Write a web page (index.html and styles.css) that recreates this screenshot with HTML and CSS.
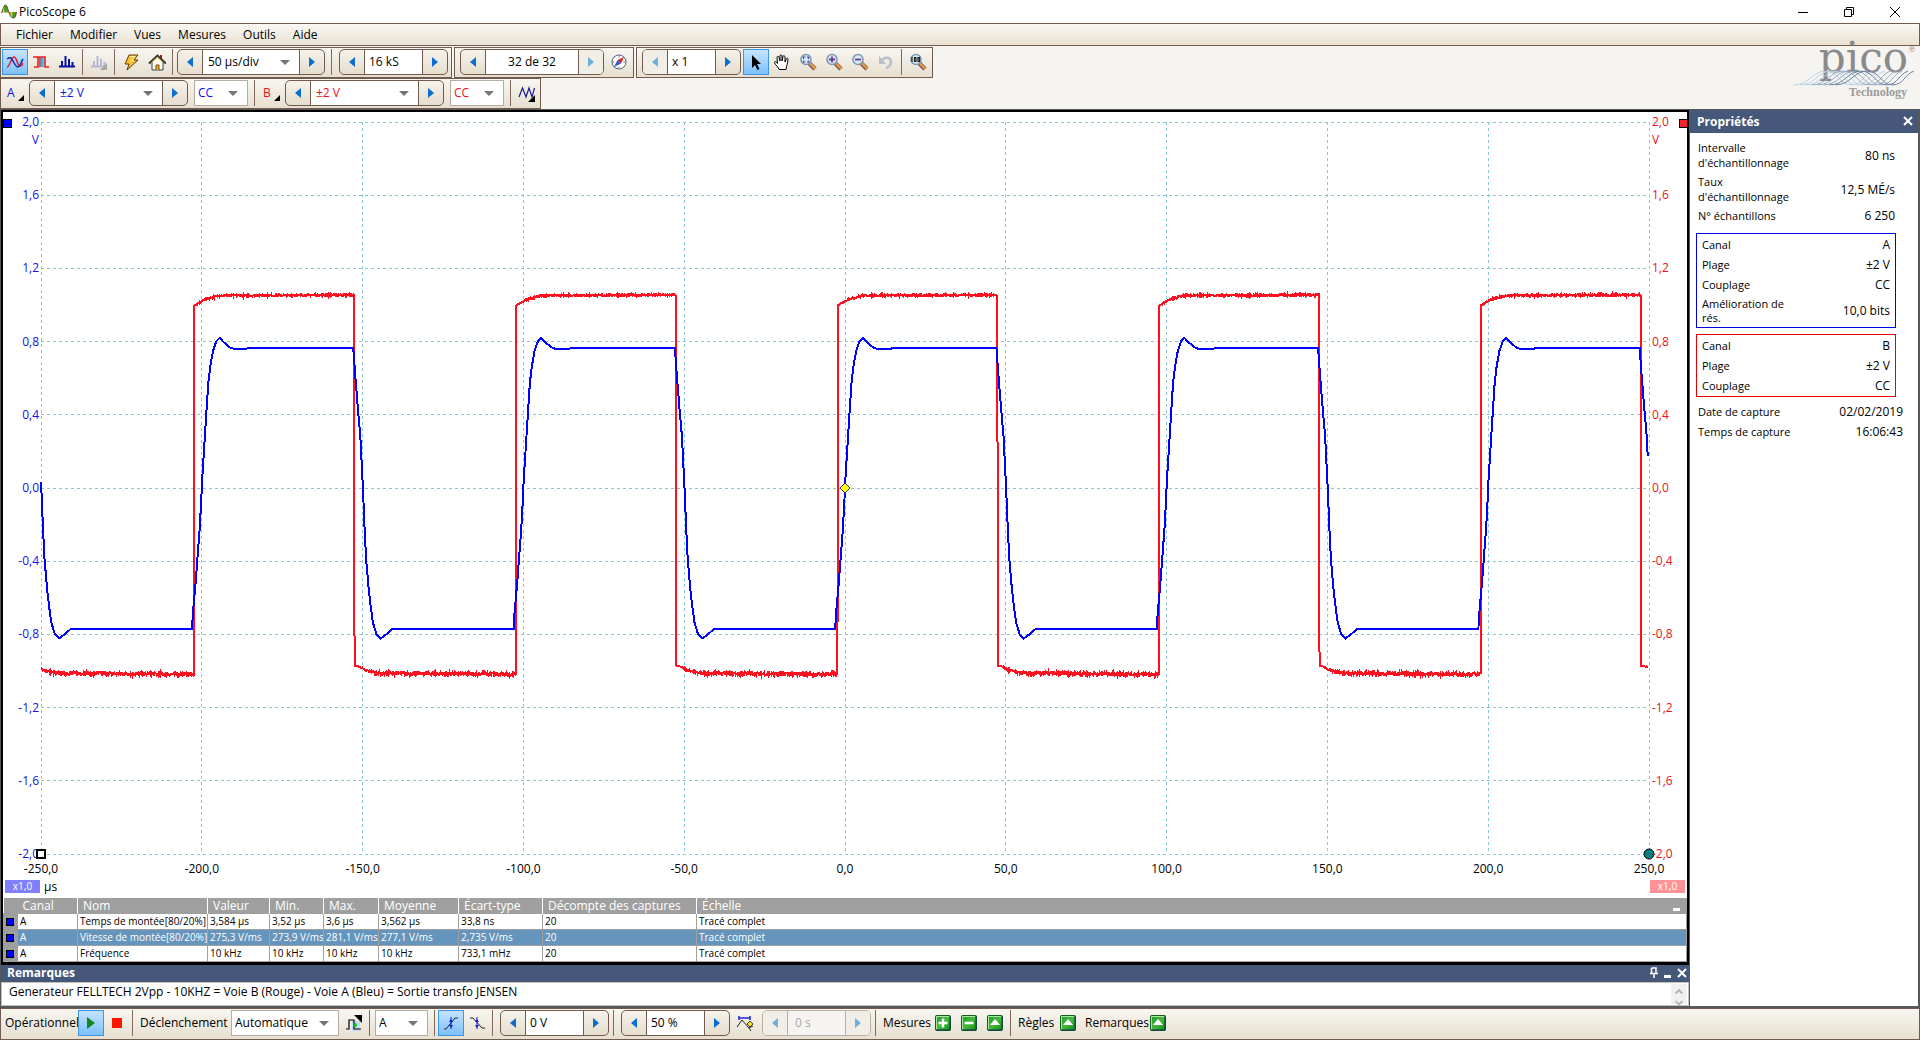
FILE: index.html
```html
<!DOCTYPE html>
<html lang="fr">
<head>
<meta charset="utf-8">
<title>PicoScope 6</title>
<link rel="stylesheet" href="styles.css">
</head>
<body>
<svg class="defs" width="0" height="0" aria-hidden="true">
  <defs>
    <linearGradient id="rainbow"><stop offset="0" stop-color="#e02818"/><stop offset=".3" stop-color="#e8d820"/><stop offset=".5" stop-color="#28a828"/><stop offset=".8" stop-color="#7a9818"/><stop offset="1" stop-color="#c84818"/></linearGradient>
    <linearGradient id="persist"><stop offset="0" stop-color="#f43c3c"/><stop offset=".5" stop-color="#30b8f0"/><stop offset="1" stop-color="#d8f4ff"/></linearGradient>
    <linearGradient id="green" x2="1" y2="1"><stop offset="0" stop-color="#1e9a2c"/><stop offset=".5" stop-color="#46b83c"/><stop offset="1" stop-color="#08900c"/></linearGradient>
    <symbol id="left" viewBox="0 0 8 12"><path d="M7 1v10L1 6z"/></symbol>
    <symbol id="right" viewBox="0 0 8 12"><path d="M1 1v10l6-5z"/></symbol>
    <symbol id="lens" viewBox="0 0 18 18"><path d="M10 10l6 6" stroke="#6a5a70" stroke-width="4.500"/><path d="M10.500 10l6 6" stroke="#f09838" stroke-width="2.400"/><circle cx="7" cy="6.500" r="5" fill="#d4ecf8" stroke="#8098b0" stroke-width="1.600"/></symbol>
    <symbol id="box" viewBox="0 0 16 16"><rect x=".5" y=".5" width="15" height="15" rx="1" fill="url(#green)" stroke="#106018"/><path d="M1.500 14V1.500H14" fill="none" stroke="#a8e8a0"/><path d="M15 1v14H1" fill="none" stroke="#163060"/></symbol>
    <symbol id="boxup" viewBox="0 0 16 16"><use href="#box"/><path d="M8 4l5 6H3z" fill="#fff"/></symbol>
  </defs>
</svg>

<div class="app">
  <header class="titlebar">
    <svg class="appicon" viewBox="0 0 16 16"><path d="M0 8.500C2 8 2 1 4.500 1S7 8 8 8.500z" fill="url(#rainbow)"/><path d="M8 8h8c-1 3-1 6-3.500 6S9 10 8 8z" fill="url(#rainbow)"/><path d="M0 9C2 8 2 1 4.500 1S8 14 12 14s2-6 4-6" fill="none" stroke="#333" stroke-width=".8"/></svg>
    <h1>PicoScope 6</h1>
    <div class="winbtns">
      <button aria-label="Réduire"><svg viewBox="0 0 12 12"><path d="M1 6.500h10" stroke="#000"/></svg></button>
      <button aria-label="Restaurer"><svg viewBox="0 0 12 12" fill="none" stroke="#000"><path d="M1.500 3.500h7v7h-7zM3.500 3.500v-2h7v7h-2"/></svg></button>
      <button aria-label="Fermer"><svg viewBox="0 0 12 12" stroke="#000"><path d="M1 1l10 10M11 1L1 11"/></svg></button>
    </div>
  </header>

  <nav class="menubar">
    <button>Fichier</button><button>Modifier</button><button>Vues</button><button>Mesures</button><button>Outils</button><button>Aide</button>
  </nav>

  <div class="toolarea">
    <div class="toolbars">
      <div class="toolrow">
        <div class="toolbar">
          <button class="tool on" aria-label="Mode oscilloscope"><svg viewBox="0 0 18 18" fill="none" stroke-width="1.500"><path d="M1 14C4 14 5 4 8 4s3 9 6 9 2-2 3-3" stroke="#e02020"/><path d="M1 6c3-2 4-2 6 2s3 6 5 6 3-5 5-8" stroke="#1428b0"/></svg></button>
          <button class="tool" aria-label="Mode persistance"><svg viewBox="0 0 18 18" fill="none"><rect x="7" y="4" width="7" height="10" fill="url(#persist)"/><path d="M1 4h12v10h4M6 4v10H2" stroke="#f02020" stroke-width="1.600"/></svg></button>
          <button class="tool" aria-label="Mode spectre"><svg viewBox="0 0 18 18"><path d="M1 13.500h16M4 14V8M7.500 14V3M11 14V6M14.500 14V9" stroke="#0c10a0" stroke-width="2"/></svg></button>
          <span class="sep"></span>
          <button class="tool" aria-label="Options du spectre" disabled><svg viewBox="0 0 18 18"><path d="M1 13.500h14M4 14V8M7.500 14V3M11 14V6M14.500 14V9" stroke="#b8b8d4" stroke-width="2"/><path d="M17 10v7h-7z" fill="#a8a8a0"/></svg></button>
          <span class="sep"></span>
          <button class="tool" aria-label="Configuration automatique"><svg viewBox="0 0 18 18"><path d="M7 2h9l-4 5h4L5 17l2-6H3z" fill="#f8c030" stroke="#5c3c08"/><path d="M8 3.500h5l-4 4h3" fill="none" stroke="#fff0a0"/></svg></button>
          <button class="tool" aria-label="Accueil"><svg viewBox="0 0 18 18"><path d="M4 9v8h11V9L9.500 4z" fill="#fffbe8" stroke="#304060"/><path d="M13 2v5" stroke="#a02020" stroke-width="2"/><path d="M1 10.500l8.500-8L18 10.500" fill="none" stroke="#303030" stroke-width="2"/><path d="M3.500 9.500l6-5.500L15 9.500" fill="none" stroke="#f0c040"/><path d="M8 17v-5h3v5" fill="#f0b030" stroke="#704808"/></svg></button>
          <span class="sep"></span>
          <div class="spin"><button aria-label="Base de temps précédente"><svg><use href="#left"/></svg></button><span class="drop w98"><select aria-label="Base de temps"><option>50 µs/div</option></select></span><button aria-label="Base de temps suivante"><svg><use href="#right"/></svg></button></div>
          <span class="sep wide"></span>
          <div class="spin"><button aria-label="Moins"><svg><use href="#left"/></svg></button><input class="w59" aria-label="Échantillons" value="16 kS"><button aria-label="Plus"><svg><use href="#right"/></svg></button></div>
        </div>
        <div class="toolbar inset">
          <div class="spin"><button aria-label="Tampon précédent"><svg><use href="#left"/></svg></button><input class="w94 center" aria-label="Tampon" value="32 de 32"><button class="dim" aria-label="Tampon suivant" disabled><svg><use href="#right"/></svg></button></div>
          <button class="tool" aria-label="Navigateur de tampons"><svg viewBox="0 0 18 18"><circle cx="9" cy="9" r="7" fill="#fff" stroke="#505878"/><path d="M9 2.500v2M9 13.500v2M2.500 9h2M13.500 9h2" stroke="#8088a0"/><path d="M14 4l-3 6.500L7.500 7z" fill="#e82020"/><path d="M4 14l3.500-7 3.500 3.500z" fill="#3058c8"/></svg></button>
        </div>
        <div class="toolbar inset">
          <div class="spin"><button class="dim" aria-label="Zoom arrière" disabled><svg><use href="#left"/></svg></button><input class="w49" aria-label="Facteur de zoom" value="x 1"><button aria-label="Zoom avant"><svg><use href="#right"/></svg></button></div>
          <button class="tool on" aria-label="Sélection"><svg viewBox="0 0 18 18"><path d="M5 2v13l3-3 2.500 5 2-1-2.500-5h4z"/></svg></button>
          <button class="tool" aria-label="Main"><svg viewBox="0 0 18 18"><path d="M6 16.500c0-2-4-4.500-4.500-7 0-1.500 2-1 3 1L4 4.500c0-1.500 1.800-1.500 2 0L7 8V3c0-1.500 2-1.500 2 0v5l1-4.500c.3-1.300 2-1 2 .5V9l1.300-3c.5-1.200 1.800-.8 1.700.5-.2 4-1.500 6-2 10z" fill="#fff" stroke="#000"/></svg></button>
          <button class="tool" aria-label="Zoom fenêtre"><svg viewBox="0 0 18 18"><use href="#lens"/><path d="M4.500 6V4h2M8 4h1.500v2M9.500 7.500V9H8M6.500 9h-2V7.500" fill="none" stroke="#5048a0" stroke-width="1.200"/></svg></button>
          <button class="tool" aria-label="Agrandir"><svg viewBox="0 0 18 18"><use href="#lens"/><path d="M4 6.500h6M7 3.500v6" stroke="#703890" stroke-width="1.800"/></svg></button>
          <button class="tool" aria-label="Réduire le zoom"><svg viewBox="0 0 18 18"><use href="#lens"/><path d="M4 6.500h6" stroke="#703890" stroke-width="1.800"/></svg></button>
          <button class="tool" aria-label="Annuler le zoom" disabled><svg viewBox="0 0 18 18"><path d="M4 8c4-5 10-4 10 1 0 3-2 5-5 6" fill="none" stroke="#b8c0cc" stroke-width="2.600"/><path d="M2 3v8h7z" fill="#b8c0cc"/></svg></button>
          <span class="sep"></span>
          <button class="tool" aria-label="Zoom 100 %"><svg viewBox="0 0 18 18"><use href="#lens"/><path d="M3 4v5M5.500 4.500H7v4H5.500zM9 4.500h1.500v4H9z" fill="none" stroke="#222" stroke-width="1.200"/></svg></button>
        </div>
      </div>
      <div class="toolrow">
        <div class="toolbar tight">
          <button class="chan blue">A<svg viewBox="0 0 6 6"><path d="M6 0v6H0z"/></svg></button>
          <div class="spin blue"><button aria-label="Plage A inférieure"><svg><use href="#left"/></svg></button><span class="drop w109"><select aria-label="Plage A"><option>±2 V</option></select></span><button aria-label="Plage A supérieure"><svg><use href="#right"/></svg></button></div>
          <span class="drop boxed w54 blue"><select aria-label="Couplage A"><option>CC</option></select></span>
          <span class="sep mid"></span>
          <button class="chan red">B<svg viewBox="0 0 6 6"><path d="M6 0v6H0z"/></svg></button>
          <div class="spin red"><button aria-label="Plage B inférieure"><svg><use href="#left"/></svg></button><span class="drop w109"><select aria-label="Plage B"><option>±2 V</option></select></span><button aria-label="Plage B supérieure"><svg><use href="#right"/></svg></button></div>
          <span class="drop boxed w54 red"><select aria-label="Couplage B"><option>CC</option></select></span>
          <span class="sep mid"></span>
          <button class="tool" aria-label="Générateur"><svg viewBox="0 0 18 18"><path d="M1 13L4.500 4 8 13l3-9 3 9 2.500-9" fill="none" stroke="#1a1a90" stroke-width="1.200"/><path d="M17 11v7h-7z"/></svg></button>
        </div>
      </div>
    </div>
    <div class="logo"><span class="pico">pico<sup>®</sup></span>
      <svg viewBox="0 0 124 16" fill="none" stroke-width="1"><g id="waves"></g></svg>
      <span class="tech">Technology</span>
    </div>
  </div>

  <main class="workspace">
    <section class="left">
      <div class="view">
        <div class="scope">
          <ul class="yaxis blue"><li>2,0<br>V</li><li>1,6</li><li>1,2</li><li>0,8</li><li>0,4</li><li>0,0</li><li>-0,4</li><li>-0,8</li><li>-1,2</li><li>-1,6</li><li>-2,0</li></ul>
          <div class="plot">
            <svg class="chart" role="img" aria-label="Signaux des voies A et B">
              <g id="grid" stroke="#8cc6d8" stroke-dasharray="3 3"></g>
              <svg id="signals" viewBox="-250 -2 500 4" preserveAspectRatio="none" width="100%" height="100%"></svg>
              <rect x="-37.500" y="-2.500" width="8" height="8" fill="#0000ff" stroke="#000"/>
              <svg x="100%"><rect x="30.500" y="-2.500" width="8" height="8" fill="#ff2030" stroke="#000"/></svg>
              <svg y="100%"><rect x="-4" y="-4" width="8" height="8" fill="#fff" stroke="#000" stroke-width="1.500"/></svg>
              <svg x="50%" y="50%"><path d="M0-5L5 0 0 5-5 0z" fill="#ff0" stroke="#303090"/></svg>
              <svg x="100%" y="100%"><circle r="5" fill="#008080" stroke="#000" stroke-width="1"/></svg>
            </svg>
          </div>
          <ul class="yaxis end red"><li>2,0<br>V</li><li>1,6</li><li>1,2</li><li>0,8</li><li>0,4</li><li>0,0</li><li>-0,4</li><li>-0,8</li><li>-1,2</li><li>-1,6</li><li>-2,0</li></ul>
          <ul class="xaxis"><li>-250,0</li><li>-200,0</li><li>-150,0</li><li>-100,0</li><li>-50,0</li><li>0,0</li><li>50,0</li><li>100,0</li><li>150,0</li><li>200,0</li><li>250,0</li></ul>
          <div class="scales"><span class="scale a">x1,0</span><span>µs</span><span class="scale b">x1,0</span></div>
        </div>
        <table class="measures">
          <colgroup><col class="c0"><col class="c1"><col class="c2"><col class="c3"><col class="c4"><col class="c5"><col class="c6"><col class="c7"><col class="c8"><col></colgroup>
          <thead><tr><th></th><th>Canal</th><th>Nom</th><th>Valeur</th><th>Min.</th><th>Max.</th><th>Moyenne</th><th>Écart-type</th><th>Décompte des captures</th><th><span class="lasthead">Échelle<button aria-label="Réduire le tableau"></button></span></th></tr></thead>
          <tbody>
            <tr><td><i></i></td><td>A</td><td><span class="name">Temps de montée<span>[80/20%]</span></span></td><td>3,584 µs</td><td>3,52 µs</td><td>3,6 µs</td><td>3,562 µs</td><td>33,8 ns</td><td>20</td><td>Tracé complet</td></tr>
            <tr class="sel"><td><i></i></td><td>A</td><td><span class="name">Vitesse de montée<span>[80/20%]</span></span></td><td>275,3 V/ms</td><td>273,9 V/ms</td><td>281,1 V/ms</td><td>277,1 V/ms</td><td>2,735 V/ms</td><td>20</td><td>Tracé complet</td></tr>
            <tr><td><i></i></td><td>A</td><td>Fréquence</td><td>10 kHz</td><td>10 kHz</td><td>10 kHz</td><td>10 kHz</td><td>733,1 mHz</td><td>20</td><td>Tracé complet</td></tr>
          </tbody>
        </table>
      </div>
      <div class="notes">
        <div class="panelhead small"><label for="notes">Remarques</label>
          <span class="headbtns">
            <button aria-label="Épingler"><svg viewBox="0 0 10 12" fill="none" stroke="#fff" stroke-width="1.500"><path d="M2.500 1h4.500v5M2.500 1v5M1 6.500h8M5 6.500V11M7 1v5"/></svg></button>
            <button aria-label="Réduire"><svg viewBox="0 0 10 12"><path d="M1 9.500h7" stroke="#fff" stroke-width="3"/></svg></button>
            <button aria-label="Fermer"><svg viewBox="0 0 10 12" stroke="#fff" stroke-width="2"><path d="M1 2l8 8M9 2l-8 8"/></svg></button>
          </span>
        </div>
        <div class="notebody">
          <input id="notes" value="Generateur FELLTECH 2Vpp - 10KHZ = Voie B (Rouge) - Voie A (Bleu) = Sortie transfo JENSEN">
          <div class="scroll"><svg viewBox="0 0 16 22" fill="none" stroke="#b4b4b4" stroke-width="2"><path d="M4.500 10L8 6.500 11.500 10M4.500 18L8 21.500 11.500 18"/></svg></div>
        </div>
      </div>
    </section>

    <aside class="props">
      <div class="panelhead"><h2>Propriétés</h2><button aria-label="Fermer les propriétés"><svg viewBox="0 0 10 12" stroke="#fff" stroke-width="2"><path d="M1 1l8 8M9 1l-8 8"/></svg></button></div>
      <dl class="sampling"><div><dt>Intervalle d'échantillonnage</dt><dd>80 ns</dd></div><div><dt>Taux d'échantillonnage</dt><dd>12,5 MÉ/s</dd></div><div><dt>N° échantillons</dt><dd>6 250</dd></div></dl>
      <dl class="card cblue"><div><dt>Canal</dt><dd>A</dd></div><div><dt>Plage</dt><dd>±2 V</dd></div><div><dt>Couplage</dt><dd>CC</dd></div><div><dt>Amélioration de rés.</dt><dd>10,0 bits</dd></div></dl>
      <dl class="card cred"><div><dt>Canal</dt><dd>B</dd></div><div><dt>Plage</dt><dd>±2 V</dd></div><div><dt>Couplage</dt><dd>CC</dd></div></dl>
      <dl class="dates"><div><dt>Date de capture</dt><dd>02/02/2019</dd></div><div><dt>Temps de capture</dt><dd>16:06:43</dd></div></dl>
    </aside>
  </main>

  <footer class="bottombar">
    <span class="lab w77">Opérationnel</span>
    <button class="tool on" aria-label="Démarrer"><svg viewBox="0 0 18 18"><path d="M5 3v12l8-6z" fill="#108820"/></svg></button>
    <button class="tool" aria-label="Arrêter"><svg viewBox="0 0 18 18"><path d="M4 4h10v10H4z" fill="#ff1400"/></svg></button>
    <span class="sep"></span>
    <label class="lab w95" for="trig">Déclenchement</label>
    <span class="drop boxed w108"><select id="trig"><option>Automatique</option></select></span>
    <button class="tool" aria-label="Déclenchement avancé"><svg viewBox="0 0 18 18"><path d="M7 7h8v10H7z" fill="#c0dcf8"/><path d="M1 15h3V6h5v9h7" fill="none" stroke="#000" stroke-width="1.200"/><path d="M9 1h8v8z"/><circle cx="10" cy="11" r="2" fill="#10c020"/></svg></button>
    <span class="sep"></span>
    <span class="drop boxed source"><select aria-label="Source"><option>A</option></select></span>
    <span class="sep mid"></span>
    <button class="tool on" aria-label="Front montant"><svg viewBox="0 0 18 18"><path d="M2 15h2L13 4h3" fill="none" stroke="#222"/><path d="M9 3v12" stroke="#1020e0"/><path d="M9 5l2 3H7zM9 14l2-3H7z" fill="#1020e0"/></svg></button>
    <button class="tool" aria-label="Front descendant"><svg viewBox="0 0 18 18"><path d="M2 4h3l9 10h3" fill="none" stroke="#222"/><path d="M9 3v12" stroke="#1020e0"/><path d="M9 5l2 3H7zM9 14l2-3H7z" fill="#1020e0"/></svg></button>
    <span class="sep"></span>
    <div class="spin"><button aria-label="Diminuer le seuil"><svg><use href="#left"/></svg></button><input class="w59" aria-label="Seuil" value="0 V"><button aria-label="Augmenter le seuil"><svg><use href="#right"/></svg></button></div>
    <span class="sep"></span>
    <div class="spin"><button aria-label="Diminuer le pré-déclenchement"><svg><use href="#left"/></svg></button><input class="w59" aria-label="Pré-déclenchement" value="50 %"><button aria-label="Augmenter le pré-déclenchement"><svg><use href="#right"/></svg></button></div>
    <button class="tool" aria-label="Retard"><svg viewBox="0 0 18 18"><path d="M1 13l5-7 7 8 2 3M13 14l4-2" fill="none" stroke="#222"/><path d="M3 2v4M14 2v4M3 4h11" stroke="#1828e0" stroke-width="1.500"/><path d="M14 7l3 3-3 3-3-3z" fill="#f8e020" stroke="#444"/></svg></button>
    <div class="spin off"><button class="dim" aria-label="Diminuer le retard" disabled><svg><use href="#left"/></svg></button><input class="w59" aria-label="Retard" value="0 s" disabled><button class="dim" aria-label="Augmenter le retard" disabled><svg><use href="#right"/></svg></button></div>
    <span class="sep"></span>
    <span class="lab w51">Mesures</span>
    <button class="tool" aria-label="Ajouter une mesure"><svg class="s16" viewBox="0 0 16 16"><use href="#box"/><path d="M3.500 8h9M8 3.500v9" stroke="#fff" stroke-width="2.500"/></svg></button>
    <button class="tool" aria-label="Supprimer une mesure"><svg class="s16" viewBox="0 0 16 16"><use href="#box"/><path d="M3.500 8h9" stroke="#fff" stroke-width="2.500"/></svg></button>
    <button class="tool" aria-label="Options de mesure"><svg class="s16"><use href="#boxup"/></svg></button>
    <span class="sep"></span>
    <span class="lab w41">Règles</span>
    <button class="tool" aria-label="Afficher les règles"><svg class="s16"><use href="#boxup"/></svg></button>
    <span class="lab w64">Remarques</span>
    <button class="tool" aria-label="Afficher les remarques"><svg class="s16"><use href="#boxup"/></svg></button>
  </footer>
</div>
<script src="scope.js"></script>
</body>
</html>
```
FILE: styles.css
```css
* { box-sizing: border-box; }
body { margin: 0; font: 12px/16px "Open Sans", "Noto Sans", sans-serif; color: #000; background: #fff; }
ul, dl, dd, h1, h2 { margin: 0; padding: 0; list-style: none; font-size: 12px; font-weight: normal; }
button, input, select { font: inherit; color: inherit; border: 0; padding: 0; margin: 0; background: none; border-radius: 0; appearance: none; min-width: 0; }
.defs { position: absolute; }
.app { min-height: 100vh; display: flex; flex-direction: column; }
.blue { color: #1010f0; }
.red { color: #f01020; }

.titlebar { display: flex; align-items: center; height: 23px; padding-left: 1px; }
.appicon { width: 16px; height: 16px; margin-right: 2px; }
.winbtns { display: flex; margin-left: auto; padding-right: 2px; }
.winbtns button { width: 46px; height: 22px; display: grid; place-items: center; }
.winbtns svg { width: 12px; height: 12px; }

.menubar { display: flex; height: 23px; padding: 0 6px; border: 1px solid #715a4e; background: linear-gradient(#faf8f4, #e9e1d1); }
.menubar button { padding: 0 8px 0 9px; }

.toolarea { display: flex; justify-content: space-between; background: #f6f4f1; padding-top: 1px; height: 63px; }
.toolrow { display: flex; height: 31px; }
.toolbar { display: flex; align-items: center; height: 31px; padding: 0 1px 1px; border: 1px solid #715a4e; background: linear-gradient(#f8f6f1, #e7dfcf); }
.toolbar.inset { padding-left: 4px; margin-left: 2px; }
.toolbar.tight { padding-right: 0; }
.tool { flex: none; width: 26px; height: 26px; display: grid; place-items: center; border: 1px solid transparent; }
.tool svg { width: 18px; height: 18px; }
.tool svg.s16 { width: 16px; height: 16px; }
.tool.on { background: linear-gradient(#c6e4fc, #7cc0fc); border-color: #3c96e8; }
.sep { flex: none; width: 1px; height: 26px; margin: 0 3px 0 2px; background: #80685a; }
.sep.mid { margin-left: 4px; }
.sep.wide { margin: 0 6px 0 4px; }

.spin { flex: none; display: flex; height: 26px; border: 1px solid #715a4e; border-radius: 5px; background: linear-gradient(#f6f3ec, #e6decd); overflow: hidden; margin: 0 2px 0 1px; }
.spin > button { width: 24px; display: grid; place-items: center; fill: #0a6ed0; }
.spin > button svg { width: 8px; height: 12px; }
.spin > button.dim { fill: #6cb0dc; background: #f1eee8; }
.spin input, .spin .drop { border: solid #715a4e; border-width: 0 1px; background: #fff; }
.spin input { padding: 0 4px; }
.spin.off { border-color: #b8b0a4; }
.spin.off input { border-color: #b8b0a4; background: #f6f4f1; color: #a8a8a8; padding-left: 7px; }
.spin input.center { text-align: center; }
.drop { display: flex; align-items: center; height: 100%; position: relative; }
.drop select { width: 100%; height: 100%; padding-left: 5px; }
.drop::after { content: ""; position: absolute; right: 9px; top: 10px; border: 5px solid transparent; border-top-color: #757575; border-bottom: 0; pointer-events: none; }
.drop.boxed { flex: none; height: 26px; border: 1px solid #b4aca2; background: #fff; margin-right: 2px; }
.drop.boxed select { padding-left: 3px; }
.toolbar .drop.boxed { margin-left: 4px; }
.w41 { width: 41px; }
.w49 { width: 49px; }
.w51 { width: 51px; }
.w54 { width: 54px; }
.w59 { width: 59px; }
.w64 { width: 64px; }
.w77 { width: 77px; }
.w94 { width: 94px; }
.w95 { width: 95px; }
.w98 { width: 98px; }
.w108 { width: 108px; }
.w109 { width: 109px; }
.chan { flex: none; display: flex; justify-content: space-between; width: 26px; height: 26px; padding: 0 4px 0 5px; line-height: 25px; }
.chan svg { width: 6px; height: 6px; margin-top: 15px; }

.logo { display: flex; flex-direction: column; align-items: flex-end; padding-right: 4px; color: #8a8a8c; }
.pico { font: 42px/42px "DejaVu Serif", serif; height: 31px; margin-top: -10px; white-space: nowrap; }
.pico sup { font-size: 8px; line-height: 8px; vertical-align: 20px; }
.logo svg { width: 122px; height: 16px; margin-top: 2px; }
.tech { font: bold 12px/12px "Liberation Serif", serif; color: #9a9a9c; padding-right: 9px; }

.workspace { flex: 1; display: flex; background: #58585a; padding: 1px 2px 2px 1px; }
.left { flex: 1; min-width: 0; display: flex; flex-direction: column; }
.view { flex: 1; display: flex; flex-direction: column; border: solid #000; border-width: 2px 2px 3px; background: #fff; }
.scope { flex: 1; display: grid; grid-template: 1fr 26px 18px / 38px 1fr 38px; padding-top: 10px; min-height: 300px; }
.plot { min-height: 0; display: grid; }
.chart { display: block; width: 100%; height: 100%; overflow: visible; shape-rendering: crispEdges; }
.chart svg { overflow: visible; }
#signals path { fill: none; stroke-width: 2; }
.chart circle { shape-rendering: auto; }
.yaxis { display: flex; flex-direction: column; justify-content: space-between; margin: -9px 2px 9px 0; text-align: right; line-height: 18px; }
.yaxis.end { margin: -9px 0 9px 3px; text-align: left; }
.yaxis li { height: 0; }
.xaxis { grid-column: 2; display: flex; justify-content: space-between; padding-top: 6px; line-height: 18px; }
.xaxis li { width: 0; display: flex; justify-content: center; white-space: nowrap; }
.scales { grid-column: 1 / 4; display: flex; gap: 4px; padding: 0 2px; line-height: 13px; }
.scale { width: 35px; height: 13px; color: #fff; font-size: 10px; text-align: center; }
.scale.a { background: #8080ff; }
.scale.b { background: #ff9296; margin-left: auto; }

.measures { table-layout: fixed; width: 100%; border-collapse: collapse; font-size: 10px; line-height: 15px; white-space: nowrap; }
.measures th { height: 15px; padding: 0 0 0 5px; background: #9f9f9f; color: #fff; font-size: 12px; font-weight: normal; text-align: left; border-left: 1px solid #fff; }
.measures th:nth-child(-n+2) { border-left: 0; }
.measures td { height: 16px; padding: 0 0 0 2px; border: 1px solid #9f9f9f; overflow: hidden; }
.measures td:first-child { background: #9f9f9f; }
.measures td i { display: block; width: 6px; height: 6px; margin-left: 1px; background: #0000ff; outline: 1px solid #000; }
.measures .sel td:not(:first-child) { background: #6595bd; color: #fff; }
.name { display: flex; justify-content: space-between; padding-right: 1px; }
.lasthead { display: flex; justify-content: space-between; }
.lasthead button { width: 7px; height: 3px; margin: 10px 7px 0 0; background: #fff; }
.c0 { width: 14px; }
.c1 { width: 60px; }
.c2 { width: 130px; }
.c3 { width: 62px; }
.c4 { width: 54px; }
.c5 { width: 55px; }
.c6 { width: 80px; }
.c7 { width: 84px; }
.c8 { width: 154px; }

.panelhead { display: flex; align-items: center; justify-content: space-between; height: 23px; padding: 0 5px 0 7px; background: #455879; color: #fff; }
.panelhead label, .panelhead h2 { font-weight: bold; }
.panelhead.small { height: 17px; padding: 0 2px 1px 6px; }
.panelhead svg { display: block; width: 10px; height: 12px; }
.headbtns { display: flex; gap: 4px; }
.notebody { display: flex; height: 24px; background: #fff; border: 1px solid #c8c0b8; }
.notebody input { flex: 1; padding: 0 0 5px 7px; }
.scroll { width: 16px; margin: 1px; background: #f0f0f0; }
.scroll svg { display: block; width: 16px; height: 21px; }

.props { width: 228px; margin-left: 1px; background: #fff; }
.props dl { font-size: 11px; line-height: 15px; }
.props dl div { display: flex; justify-content: space-between; align-items: center; padding: 2px 0 3px; }
.props dt { width: 100px; }
.props .sampling { padding: 5px 23px 0 8px; }
.props .sampling div { padding-bottom: 2px; }
.props .card { margin: 8px 22px 0 6px; padding: 1px 5px 0; border: 1px solid #0000e8; }
.props .cblue div:last-child { padding-bottom: 2px; line-height: 14px; }
.props .cred { margin: 6px 22px 5px 6px; border-color: #e80000; }
.props .dates { padding: 0 15px 0 8px; }

.bottombar { display: flex; align-items: center; height: 32px; padding-bottom: 2px; border: 1px solid #715a4e; background: linear-gradient(#f8f6f1, #e7dfcf); white-space: nowrap; }
.bottombar .spin { margin-left: 4px; }
.lab { flex: none; padding-left: 4px; }
.source { width: 53px; margin-left: 2px; }
```
FILE: scope.js
```js
const NS = 'http://www.w3.org/2000/svg';

function add(parent, tag, attrs) {
  const el = document.createElementNS(NS, tag);
  for (const name in attrs) el.setAttribute(name, attrs[name]);
  parent.appendChild(el);
}

// Graticule: ten divisions in each direction
const grid = document.getElementById('grid');
for (let i = 0; i <= 10; i++) {
  const p = i * 10 + '%';
  add(grid, 'line', { x1: p, x2: p, y1: 0, y2: '100%' });
  add(grid, 'line', { x1: 0, x2: '100%', y1: p, y2: p });
}

// One 100 µs period of each channel: [µs, volts, noise]
const channelA = [
  [-3.06, -0.771], [-2.75, -0.68], [-1.92, -0.517], [-1.3, -0.371], [-0.67, -0.226],
  [-0.16, -0.062], [0.05, 0.029], [0.57, 0.175], [1.09, 0.32], [1.61, 0.466],
  [2.02, 0.575], [2.64, 0.666], [3.47, 0.748], [4.51, 0.802], [5.55, 0.82],
  [6.79, 0.797], [8.65, 0.769], [9.69, 0.762], [47.1, 0.764], [47.73, 0.611],
  [48.56, 0.429], [49.29, 0.284], [50.1, 0], [50.6, -0.216], [51.1, -0.389],
  [51.9, -0.553], [52.5, -0.644], [53.2, -0.735], [54.3, -0.799], [55.6, -0.822],
  [57.4, -0.799], [59.2, -0.771], [96.94, -0.771]
];
const channelB = [
  [-2.33, -1.018], [-2.3, 0.996], [0.9, 1.03, 0.003], [5.5, 1.052, 0.005],
  [47.4, 1.055, 0.005], [47.45, -0.762], [47.6, -0.971], [49.1, -0.977],
  [50.6, -0.995, 0.005], [54.8, -1.012, 0.006], [97.67, -1.018, 0.009]
];

let seed = 7;
function random() {
  seed = (seed * 16807) % 2147483647;
  return seed / 1073741823.5 - 1;
}

function between(a, b, t) {
  return [t, a[1] + (b[1] - a[1]) * (t - a[0]) / (b[0] - a[0])];
}

function trace(points, colour) {
  const all = [];
  for (let n = -3; n <= 2; n++) {
    points.forEach(([t, v, noise], i) => {
      if (noise) {
        for (let s = points[i - 1][0] + 0.15; s < t; s += 0.15) {
          const level = between(points[i - 1], [t, v], s)[1];
          all.push([s + n * 100, level + random() * noise]);
        }
      }
      all.push([t + n * 100, v]);
    });
  }
  const start = -250, end = 249.6;
  const shown = [];
  for (let i = 1; i < all.length; i++) {
    const a = all[i - 1], b = all[i];
    if (a[0] < start && b[0] >= start) shown.push(between(a, b, start));
    if (b[0] >= start && b[0] <= end) shown.push(b);
    if (a[0] <= end && b[0] > end) shown.push(between(a, b, end));
  }
  const d = 'M' + shown.map(p => p[0].toFixed(2) + ' ' + (-p[1]).toFixed(4)).join('L');
  add(document.getElementById('signals'), 'path', { d, stroke: colour, 'vector-effect': 'non-scaling-stroke' });
}

trace(channelB, '#ff1020');
trace(channelA, '#0000ff');

// Interleaved waves under the brand name
for (let i = 0; i < 8; i++) {
  const x = i * 6;
  add(document.getElementById('waves'), 'path', {
    d: `M${x} 15C${x + 16} 15 ${x + 18} 1 ${x + 32} 1S${x + 46} 15 ${x + 58} 15S${x + 70} 4 ${x + 80} 1`,
    stroke: i < 3 ? '#b8d0e4' : i < 6 ? '#90a8c4' : '#667ea0'
  });
}
```
